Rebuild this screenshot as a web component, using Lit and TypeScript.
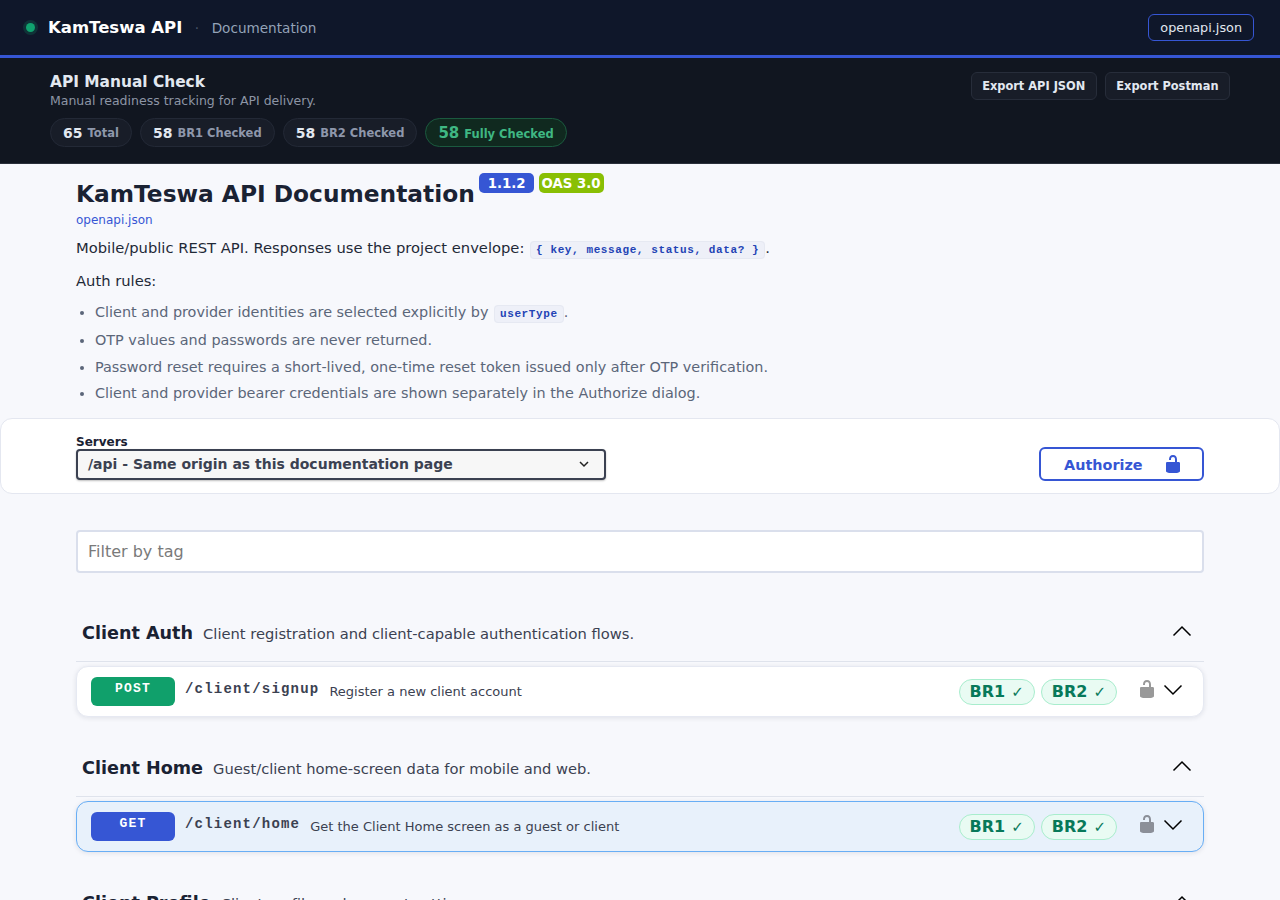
import { LitElement, css, html } from 'lit';
import { customElement } from 'lit/decorators.js';

const lockOpen = html`<svg viewBox="0 0 20 20" width="20" height="20" fill="currentColor"><path d="M15.8 8H14V5.6C14 2.703 12.665 1 10 1 7.334 1 6 2.703 6 5.6V6h2v-.801C8 3.754 8.797 3 10 3c1.203 0 2 .754 2 2.199V8H4c-.553 0-1 .646-1 1.199V17c0 .549.428 1.139.951 1.307l1.197.387C5.672 18.861 6.55 19 7.1 19h5.8c.549 0 1.428-.139 1.951-.307l1.196-.387c.524-.167.953-.757.953-1.306V9.199C17 8.646 16.352 8 15.8 8z"/></svg>`;
const chevronUp = html`<svg viewBox="0 0 20 20" width="20" height="20" fill="none" stroke="currentColor" stroke-width="1.5"><path d="M1.5 14.5 L10 6 L18.5 14.5"/></svg>`;
const chevronDown = html`<svg viewBox="0 0 20 20" width="20" height="20" fill="none" stroke="currentColor" stroke-width="1.5"><path d="M1.5 5.5 L10 14 L18.5 5.5"/></svg>`;

interface Op {
  method: string;
  path: string;
  summary: string;
  kind: string;
}

interface Tag {
  name: string;
  desc: string;
  ops: Op[];
}

const tags: Tag[] = [
  {
    name: 'Client Auth',
    desc: 'Client registration and client-capable authentication flows.',
    ops: [{ method: 'POST', path: '/client/signup', summary: 'Register a new client account', kind: 'post' }],
  },
  {
    name: 'Client Home',
    desc: 'Guest/client home-screen data for mobile and web.',
    ops: [{ method: 'GET', path: '/client/home', summary: 'Get the Client Home screen as a guest or client', kind: 'get' }],
  },
  { name: 'Client Profile', desc: 'Client profile and account settings.', ops: [] },
];

@customElement('app-root')
export class AppRoot extends LitElement {
  static styles = css`
    :host {
      display: block;
      height: 900px;
      overflow: hidden;
      background: #f7f8fc;
      font-family: 'DejaVu Sans', sans-serif;
      color: #1a2233;
    }
    a {
      text-decoration: none;
    }

    /* top bar */
    .topbar {
      height: 55px;
      box-sizing: content-box;
      border-bottom: 3px solid #3656d4;
      background: #0f172a;
      display: flex;
      align-items: center;
      padding: 0 26px 0 24px;
    }
    .dot {
      width: 9px;
      height: 9px;
      border-radius: 50%;
      background: #10a36f;
      box-shadow: 0 0 0 3px rgba(16, 163, 111, 0.2);
      margin-right: 13px;
      margin-left: 2px;
    }
    .brand {
      font-size: 16.5px;
      font-weight: 700;
      color: #fff;
    }
    .sep {
      color: #475569;
      font-size: 13.6px;
      margin: 0 12.5px;
    }
    .crumb {
      font-size: 13.6px;
      color: #94a3b8;
    }
    .spec-link {
      margin-left: auto;
      box-sizing: border-box;
      height: 27px;
      padding: 0 11px;
      display: flex;
      align-items: center;
      border: 1px solid #3656d4;
      border-radius: 6px;
      font-size: 12.8px;
      color: #e2e8f0;
    }

    /* manual check panel */
    .panel {
      box-sizing: border-box;
      height: 106px;
      background: #111620;
      border-bottom: 1px solid #2a2f3a;
      padding: 15px 50px 0;
      display: flex;
      justify-content: space-between;
      align-items: flex-start;
    }
    .panel h3 {
      margin: 0;
      font-size: 15.4px;
      line-height: 19px;
      font-weight: 700;
      color: #e2e8f0;
    }
    .panel p {
      margin: 0 0 8px;
      font-size: 12.5px;
      line-height: 18px;
      color: #8d95a5;
    }
    .stats {
      display: flex;
      gap: 8px;
      align-items: center;
    }
    .stat {
      box-sizing: border-box;
      height: 29px;
      padding: 0 12px;
      display: flex;
      align-items: center;
      gap: 5px;
      border-radius: 999px;
      background: #181d28;
      border: 1px solid #232936;
    }
    .stat b {
      font-size: 14px;
      color: #e2e8f0;
    }
    .stat span {
      font-size: 11.5px;
      font-weight: 700;
      color: #8e97ab;
    }
    .stat.done {
      background: #10291f;
      border: 1px solid #1b5a3f;
      padding-top: 1px;
    }
    .stat.done b {
      font-size: 15px;
      color: #3fb783;
    }
    .stat.done span {
      color: #3fb783;
      padding-top: 2px;
    }
    .exports {
      display: flex;
      gap: 8px;
      margin-top: -1px;
    }
    .exports button {
      box-sizing: border-box;
      height: 28px;
      padding: 0 10.5px;
      background: #181d28;
      border: 1px solid #272d3a;
      border-radius: 6px;
      font: 700 11.4px 'DejaVu Sans', sans-serif;
      color: #e2e8f0;
    }

    /* api info */
    .info {
      padding: 9px 76px 0;
    }
    .title {
      display: flex;
      align-items: flex-start;
      gap: 4.5px;
    }
    .title h1 {
      margin: 6px 0 0;
      font-size: 23.3px;
      line-height: 30px;
      font-weight: 700;
      color: #1a2233;
    }
    .badge {
      height: 20px;
      border-radius: 5px;
      padding: 0 8.5px;
      display: flex;
      align-items: center;
      font-size: 13.3px;
      font-weight: 700;
      color: #fff;
      background: #3656d4;
    }
    .badge.oas {
      padding: 0 3px;
      background: #89bf04;
    }
    .spec-url {
      display: block;
      margin-top: 3px;
      font-size: 12px;
      line-height: 16px;
      color: #3656d4;
    }
    .info p {
      margin: 0;
      font-size: 14.72px;
      line-height: 20px;
      color: #1f2937;
    }
    .lead {
      padding-top: 10px;
    }
    .info .rules {
      padding-top: 11px;
    }
    code {
      font-family: 'Liberation Mono', monospace;
      font-weight: 700;
      font-size: 11px;
      letter-spacing: 0.6px;
      color: #2343b5;
      background: #eef0f8;
      border: 1px solid #e6e9f2;
      border-radius: 4px;
      padding: 2px 5px;
      margin-left: 1px;
    }
    ul {
      margin: 11px 0 0;
      padding-left: 19px;
      font-size: 14.4px;
      color: #5b6679;
    }
    li {
      line-height: 20px;
      margin-bottom: 6.4px;
    }

    /* servers */
    .servers {
      box-sizing: border-box;
      height: 76px;
      margin-top: 14.6px;
      background: #fff;
      border: 1px solid #e4e7f0;
      border-radius: 12px;
      padding: 16px 75px 0;
      display: flex;
      justify-content: space-between;
    }
    .servers label {
      display: block;
      font-size: 12px;
      line-height: 14px;
      font-weight: 700;
      color: #1a2233;
    }
    .select {
      box-sizing: border-box;
      width: 530px;
      height: 31px;
      border: 2px solid #3b4151;
      border-radius: 4px;
      background: #f7f7f7;
      box-shadow: 0 1px 2px rgba(0, 0, 0, 0.25);
      padding: 0 15px 0 10px;
      display: flex;
      align-items: center;
      justify-content: space-between;
      font-size: 14px;
      font-weight: 700;
      color: #3b4151;
    }
    .authorize {
      box-sizing: border-box;
      width: 165px;
      height: 34px;
      margin-top: 12px;
      padding: 0 0 0 23px;
      border: 2px solid #3656d4;
      border-radius: 6px;
      background: #fff;
      display: flex;
      align-items: center;
      gap: 20px;
      font: 700 14.4px 'DejaVu Sans', sans-serif;
      color: #3656d4;
    }
    .authorize span {
      padding-top: 2px;
    }

    .filter {
      box-sizing: border-box;
      height: 43px;
      margin: 36px 76px 0;
      border: 2px solid #dadfec;
      border-radius: 4px;
      background: #fff;
      padding: 0 10px;
      display: flex;
      align-items: center;
      font-size: 16px;
      color: #7a7a7a;
    }

    /* tag sections */
    .tags {
      padding: 32px 76px 0;
    }
    .tag {
      margin-bottom: 23px;
    }
    .tag-head {
      box-sizing: border-box;
      height: 57px;
      border-bottom: 1px solid #dfe3ec;
      padding: 0 12px 1px 6px;
      display: flex;
      align-items: center;
      gap: 10px;
    }
    .tag-head h4 {
      margin: 0;
      padding-top: 2px;
      font-size: 17.6px;
      font-weight: 700;
      color: #1a2233;
    }
    .tag-head span {
      font-size: 14.7px;
      color: #3b4151;
      padding-top: 2px;
    }
    .tag-head svg {
      margin: -2px 0 0 auto;
      color: #000;
    }
    .op {
      box-sizing: border-box;
      height: 51px;
      margin-top: 4px;
      border: 1px solid #e6e9f2;
      border-radius: 12px;
      background: #fff;
      box-shadow: 0 1px 5px rgba(20, 30, 60, 0.1);
      padding: 0 20px 0 14px;
      display: flex;
      align-items: flex-start;
    }
    .op.get {
      background: #e8f1fb;
      border-color: #68aef5;
    }
    .method {
      box-sizing: border-box;
      width: 84px;
      height: 29px;
      margin-top: 10px;
      padding-top: 4px;
      border-radius: 6px;
      background: #10a06b;
      color: #fff;
      font-family: 'Liberation Mono', monospace;
      font-size: 13px;
      letter-spacing: 1.2px;
      font-weight: 700;
      text-align: center;
    }
    .op.get .method {
      background: #3656d4;
    }
    .path {
      margin: 13px 10px 0;
      font-family: 'Liberation Mono', monospace;
      font-size: 14px;
      letter-spacing: 1.2px;
      font-weight: 700;
      line-height: 18px;
      color: #3b4151;
    }
    .summary {
      margin-top: 16px;
      font-size: 13px;
      line-height: 17px;
      color: #3b4151;
    }
    .checks {
      margin-left: auto;
      margin-top: 12px;
      display: flex;
      gap: 6px;
    }
    .check {
      box-sizing: border-box;
      height: 26px;
      padding: 0 10px;
      display: flex;
      align-items: center;
      gap: 6px;
      border: 1px solid #a8edcd;
      border-radius: 999px;
      background: #e9fbf3;
      color: #08795a;
      font-size: 16px;
      font-weight: 700;
    }
    .check i {
      font-style: normal;
      font-weight: 400;
      font-size: 15px;
    }
    .lock {
      margin: 12px 0 0 20px;
      color: #999;
    }
    .op.get .lock {
      color: #8b8f98;
    }
    .op-chevron {
      margin: 13px 0 0 6px;
      color: #000;
    }
  `;

  private renderOp(op: Op) {
    return html`
      <div class="op ${op.kind}">
        <div class="method">${op.method}</div>
        <div class="path">${op.path}</div>
        <div class="summary">${op.summary}</div>
        <div class="checks">
          <div class="check">BR1 <i>✓</i></div>
          <div class="check">BR2 <i>✓</i></div>
        </div>
        <div class="lock">${lockOpen}</div>
        <div class="op-chevron">${chevronDown}</div>
      </div>
    `;
  }

  render() {
    return html`
      <header class="topbar">
        <div class="dot"></div>
        <div class="brand">KamTeswa API</div>
        <div class="sep">·</div>
        <div class="crumb">Documentation</div>
        <a class="spec-link">openapi.json</a>
      </header>

      <section class="panel">
        <div>
          <h3>API Manual Check</h3>
          <p>Manual readiness tracking for API delivery.</p>
          <div class="stats">
            <div class="stat"><b>65</b><span>Total</span></div>
            <div class="stat"><b>58</b><span>BR1 Checked</span></div>
            <div class="stat"><b>58</b><span>BR2 Checked</span></div>
            <div class="stat done"><b>58</b><span>Fully Checked</span></div>
          </div>
        </div>
        <div class="exports">
          <button>Export API JSON</button>
          <button>Export Postman</button>
        </div>
      </section>

      <section class="info">
        <div class="title">
          <h1>KamTeswa API Documentation</h1>
          <div class="badge">1.1.2</div>
          <div class="badge oas">OAS 3.0</div>
        </div>
        <a class="spec-url">openapi.json</a>
        <p class="lead">Mobile/public REST API. Responses use the project envelope: <code>{ key, message, status, data? }</code>.</p>
        <p class="rules">Auth rules:</p>
        <ul>
          <li>Client and provider identities are selected explicitly by <code>userType</code>.</li>
          <li>OTP values and passwords are never returned.</li>
          <li>Password reset requires a short-lived, one-time reset token issued only after OTP verification.</li>
          <li>Client and provider bearer credentials are shown separately in the Authorize dialog.</li>
        </ul>
      </section>

      <section class="servers">
        <div>
          <label>Servers</label>
          <div class="select">
            <span>/api - Same origin as this documentation page</span>
            <svg viewBox="0 0 10 10" width="10" height="10" fill="none" stroke="#222" stroke-width="1.5"><path d="M1 3 L5 7 L9 3"/></svg>
          </div>
        </div>
        <button class="authorize"><span>Authorize</span> ${lockOpen}</button>
      </section>

      <div class="filter">Filter by tag</div>

      <div class="tags">
        ${tags.map(
          (t) => html`
            <section class="tag">
              <div class="tag-head">
                <h4>${t.name}</h4>
                <span>${t.desc}</span>
                ${chevronUp}
              </div>
              ${t.ops.map((op) => this.renderOp(op))}
            </section>
          `
        )}
      </div>
    `;
  }
}
